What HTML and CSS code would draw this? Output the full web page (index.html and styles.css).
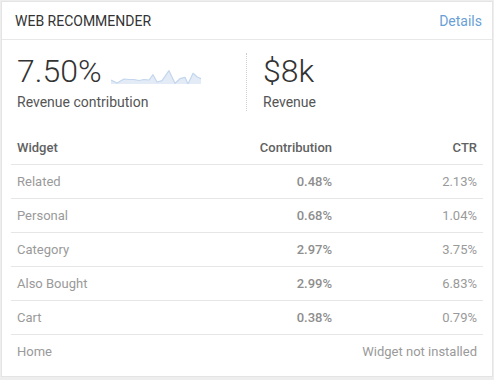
FILE: index.html
```html
<!DOCTYPE html>
<html lang="en">
<head>
<meta charset="utf-8">
<title>Web Recommender</title>
<link rel="stylesheet" href="styles.css">
</head>
<body>
<div class="card">
  <div class="card-header">
    <span class="card-title">WEB RECOMMENDER</span>
    <a class="card-link" href="#">Details</a>
  </div>
  <div class="metrics">
    <div class="metric metric-main">
      <div class="metric-value">7.50%<svg class="spark" width="90" height="18" viewBox="0 0 90 18"><path class="spark-fill" d="M0 14 L6 17 L13 13 L18 13.5 L23 13.5 L28 14.5 L33 13.5 L38 14 L42 8.7 L46 16 L51 14.7 L58 4.7 L64 17.3 L69 12.7 L74 11.3 L77 18 L82 7.3 L86 10.7 L90 12.7 L90 18 L0 18 Z"/><path class="spark-line" d="M0 14 L6 17 L13 13 L18 13.5 L23 13.5 L28 14.5 L33 13.5 L38 14 L42 8.7 L46 16 L51 14.7 L58 4.7 L64 17.3 L69 12.7 L74 11.3 L77 18 L82 7.3 L86 10.7 L90 12.7"/></svg></div>
      <div class="metric-label">Revenue contribution</div>
    </div>
    <div class="metric metric-side">
      <div class="metric-value">$8k</div>
      <div class="metric-label">Revenue</div>
    </div>
  </div>
  <table class="widgets">
    <thead>
      <tr><th class="c-name">Widget</th><th class="c-num">Contribution</th><th class="c-num c-ctr">CTR</th></tr>
    </thead>
    <tbody>
      <tr><td class="c-name">Related</td><td class="c-num c-bold">0.48%</td><td class="c-num">2.13%</td></tr>
      <tr><td class="c-name">Personal</td><td class="c-num c-bold">0.68%</td><td class="c-num">1.04%</td></tr>
      <tr><td class="c-name">Category</td><td class="c-num c-bold">2.97%</td><td class="c-num">3.75%</td></tr>
      <tr><td class="c-name">Also Bought</td><td class="c-num c-bold">2.99%</td><td class="c-num">6.83%</td></tr>
      <tr><td class="c-name">Cart</td><td class="c-num c-bold">0.38%</td><td class="c-num">0.79%</td></tr>
      <tr><td class="c-name">Home</td><td class="c-num" colspan="2">Widget not installed</td></tr>
    </tbody>
  </table>
</div>
</body>
</html>
```

FILE: styles.css
```css
html { background: #eeeeee; }
body {
  margin: 0;
  padding: 1px;
  font-family: Roboto, "Liberation Sans", Arial, sans-serif;
  color: #333;
}
.card {
  background: #fff;
  border: 1px solid #e4e4e4;
  height: 376px;
  box-sizing: border-box;
}
.card-header {
  display: flex;
  justify-content: space-between;
  align-items: center;
  padding: 11px 10px 10px 13px;
  line-height: 16px;
  font-size: 14px;
  border-bottom: 1px solid #e8e8e8;
}
.card-title { color: #333; }
.card-link { color: #6a9fd6; text-decoration: none; }
.metrics {
  display: flex;
  padding: 13px 0 0 15px;
}
.metric-main { width: 229px; }
.metric-side {
  border-left: 1px dotted #cfcfcf;
  padding-left: 16px;
}
.metric-value {
  font-size: 32px;
  line-height: 36px;
  font-weight: 300;
  color: #333;
  display: flex;
  align-items: flex-end;
}
.spark {
  margin-left: 9px;
  margin-bottom: 5px;
  display: block;
}
.spark-fill { fill: #e2ebf6; }
.spark-line { fill: none; stroke: #c3d6ee; stroke-width: 1.2; stroke-linejoin: round; }
.metric-label {
  margin-top: 4px;
  font-size: 14px;
  line-height: 18px;
  color: #555;
}
.widgets {
  margin: 20px 9px 0;
  width: 472px;
  border-collapse: collapse;
  font-size: 13px;
}
.widgets th, .widgets td {
  height: 33px;
  padding: 0 6px;
  border-bottom: 1px solid #e6e6e6;
  line-height: 16px;
}
.widgets tbody tr:last-child td { border-bottom: none; }
.widgets th {
  font-weight: 500;
  color: #616161;
}
.widgets td { color: #9a9a9a; }
.c-name { text-align: left; }
.c-num { text-align: right; }
.c-ctr { width: 133px; }
.widgets td.c-bold { font-weight: 500; color: #8e8e8e; }
```
